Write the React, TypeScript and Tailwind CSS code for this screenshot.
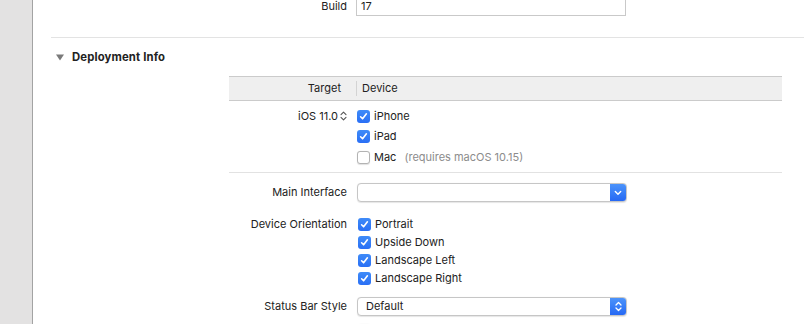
import React from "react";

const font = { fontFamily: "Inter, 'Liberation Sans', sans-serif" };

function Check({ on }: { on: boolean }) {
  if (!on) {
    return (
      <span className="w-[13px] h-[13px] rounded-[3px] border border-[#b3b3b3] bg-white shadow-[0_0.5px_1px_rgba(0,0,0,0.12)] shrink-0" />
    );
  }
  return (
    <span className="w-[13px] h-[13px] rounded-[3px] bg-gradient-to-b from-[#3f8bf8] to-[#2a6ff5] flex items-center justify-center shrink-0">
      <svg width="9" height="9" viewBox="0 0 9 9">
        <path d="M1.6 4.8 L3.6 6.8 L7.4 1.8" fill="none" stroke="white" strokeWidth="1.6" strokeLinecap="round" strokeLinejoin="round" />
      </svg>
    </span>
  );
}

function CheckRow({ on, label, note, h = "h-[18px]" }: { on: boolean; label: string; note?: string; h?: string }) {
  return (
    <div className={`flex items-center gap-[4px] ${h}`}>
      <Check on={on} />
      <span>{label}</span>
      {note && <span className="ml-[4px] text-[#8c8c8c]">{note}</span>}
    </div>
  );
}

function Popup({ value, stepper }: { value?: string; stepper?: boolean }) {
  return (
    <div className="w-[270px] h-[19px] flex rounded-[4px] border border-[#c6c6c6] bg-white shadow-[0_0.5px_1px_rgba(0,0,0,0.1)] overflow-hidden">
      <div className="flex-1 flex items-center pl-[8px]">{value}</div>
      <div className="w-[16px] bg-gradient-to-b from-[#4c93fa] to-[#2668f4] flex items-center justify-center">
        {stepper ? (
          <svg width="7" height="11" viewBox="0 0 7 11">
            <path d="M1 4 L3.5 1.5 L6 4 M1 7 L3.5 9.5 L6 7" fill="none" stroke="white" strokeWidth="1.3" strokeLinecap="round" strokeLinejoin="round" />
          </svg>
        ) : (
          <svg width="8" height="6" viewBox="0 0 8 6">
            <path d="M1.3 1.5 L4 4.2 L6.7 1.5" fill="none" stroke="white" strokeWidth="1.4" strokeLinecap="round" strokeLinejoin="round" />
          </svg>
        )}
      </div>
    </div>
  );
}

export default function App() {
  return (
    <div className="w-[804px] h-[324px] overflow-hidden flex bg-white text-[11px] text-[#222]" style={font}>
      {/* sidebar strip */}
      <div className="w-[33px] shrink-0 bg-[#e3e2e2] border-r border-[#a3a3a3]" />

      <div className="flex-1 min-w-0">
        {/* Build row (cut off at top) */}
        <div className="flex items-center h-[20px] mt-[-4px]">
          <div className="w-[314px] text-right">Build</div>
          <div className="ml-[9px] w-[270px] h-[20px] border border-[#c9c9c9] flex items-center pl-[4px]">17</div>
        </div>

        <div className="mt-[21px] ml-[18px] h-px bg-[#e3e3e3]" />

        {/* Section header */}
        <div className="mt-[9px] h-[20px] flex items-center pl-[23px] gap-[8px]">
          <svg width="8" height="7" viewBox="0 0 8 7">
            <path d="M0 0.5 H8 L4 6.5 Z" fill="#7a7a7a" />
          </svg>
          <span className="font-bold text-[11.3px] tracking-[0.15px] text-[#222]">Deployment Info</span>
        </div>

        {/* Table */}
        <div className="ml-[196px] mr-[22px] mt-[9px]">
          <div className="h-[25px] flex items-center bg-[#efefef] border-y border-[#cbcbcb]">
            <div className="w-[127px] text-right pr-[15px]">Target</div>
            <div className="w-px h-[15px] bg-[#d3d3d3]" />
            <div className="pl-[5px]">Device</div>
          </div>

          <div className="flex mt-[5px]">
            <div className="w-[118px] h-[20px] flex items-center justify-end gap-[2px]">
              <span>iOS 11.0</span>
              <svg width="7" height="10" viewBox="0 0 7 10">
                <path d="M1 3.6 L3.5 1.2 L6 3.6 M1 6.4 L3.5 8.8 L6 6.4" fill="none" stroke="#555" strokeWidth="1.1" strokeLinecap="round" strokeLinejoin="round" />
              </svg>
            </div>
            <div className="ml-[10px] flex flex-col">
              <CheckRow on label="iPhone" h="h-[20px]" />
              <CheckRow on label="iPad" h="h-[20px]" />
              <div className="mt-[1px]">
                <CheckRow on={false} label="Mac" note="(requires macOS 10.15)" h="h-[20px]" />
              </div>
            </div>
          </div>

          <div className="mt-[5px] h-px bg-[#e2e2e2]" />

          <div className="flex items-center mt-[10px] h-[19px]">
            <div className="w-[118px] text-right">Main Interface</div>
            <div className="ml-[10px]">
              <Popup />
            </div>
          </div>

          <div className="flex mt-[13px]">
            <div className="w-[118px] h-[18px] flex items-center justify-end">Device Orientation</div>
            <div className="ml-[11px] flex flex-col">
              <CheckRow on label="Portrait" />
              <CheckRow on label="Upside Down" />
              <CheckRow on label="Landscape Left" />
              <CheckRow on label="Landscape Right" />
            </div>
          </div>

          <div className="flex items-center mt-[10px] h-[19px]">
            <div className="w-[118px] text-right">Status Bar Style</div>
            <div className="ml-[10px]">
              <Popup value="Default" stepper />
            </div>
          </div>

          <div className="flex mt-[5px]">
            <div className="w-[118px]" />
            <div className="ml-[11px]">
              <CheckRow on={false} label="Hide status bar" />
            </div>
          </div>
        </div>
      </div>
    </div>
  );
}
